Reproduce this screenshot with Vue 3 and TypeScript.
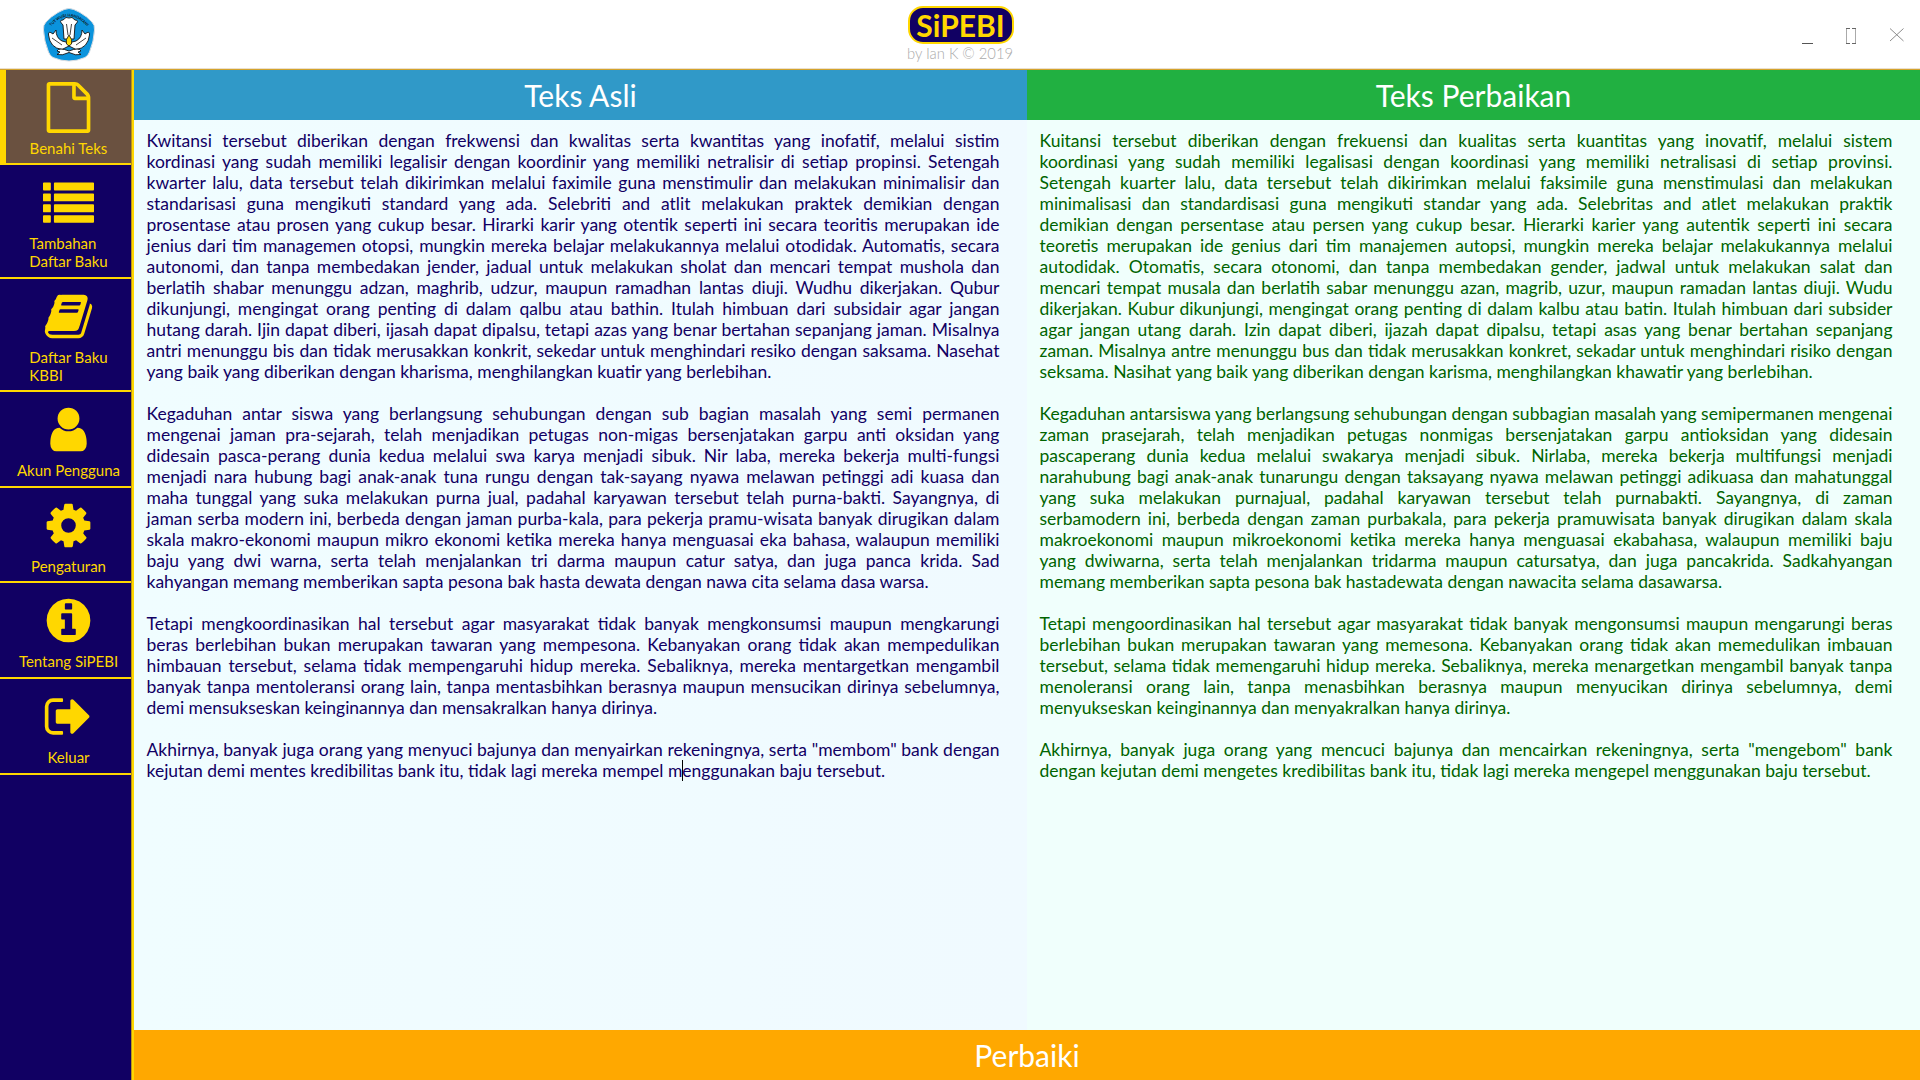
<script setup lang="ts">
interface MenuItem {
  label: string[]
  icon: string
  active?: boolean
}

const menu: MenuItem[] = [
  {
    label: ['Benahi Teks'],
    active: true,
    icon: 'M1596 380q28 28 48 76t20 88v1152q0 40-28 68t-68 28h-1344q-40 0-68-28t-28-68v-1600q0-40 28-68t68-28h896q40 0 88 20t76 48zm-444-244v376h376q-10-29-22-41l-313-313q-12-12-41-22zm384 1528v-1024h-416q-40 0-68-28t-28-68v-416h-768v1536h1280z',
  },
  {
    label: ['Tambahan', 'Daftar Baku'],
    icon: 'M30 192h216q30 0 30 30v220q0 30-30 30h-216q-30 0-30-30v-220q0-30 30-30zM30 576h216q30 0 30 30v220q0 30-30 30h-216q-30 0-30-30v-220q0-30 30-30zM30 960h216q30 0 30 30v220q0 30-30 30h-216q-30 0-30-30v-220q0-30 30-30zM30 1344h216q30 0 30 30v200q0 30-30 30h-216q-30 0-30-30v-200q0-30 30-30zM414 192h1348q30 0 30 30v220q0 30-30 30h-1348q-30 0-30-30v-220q0-30 30-30zM414 576h1348q30 0 30 30v220q0 30-30 30h-1348q-30 0-30-30v-220q0-30 30-30zM414 960h1348q30 0 30 30v220q0 30-30 30h-1348q-30 0-30-30v-220q0-30 30-30zM414 1344h1348q30 0 30 30v200q0 30-30 30h-1348q-30 0-30-30v-200q0-30 30-30z',
  },
  {
    label: ['Daftar Baku', 'KBBI'],
    icon: 'M1703 478q40 57 18 129l-275 906q-19 64-76.500 107.500t-122.500 43.500h-923q-77 0-148.500-53.500t-99.500-131.500q-24-67-2-127 0-4 3-27t4-37q1-8-3-21.500t-3-19.500q2-11 8-21t16.500-23.500 16.500-23.500q23-38 45-91.500t30-91.500q3-10 .5-30t-.5-28q3-11 17-28t17-23q21-36 42-92t25-90q1-9-2.500-32t.5-28q4-13 22-30.500t22-22.500q19-26 42.500-84.500t27.500-96.500q1-8-3-25.500t-2-26.500q2-8 9-18t18-23 17-21q8-12 16.500-30.500t15-35 16-36 19.500-32 26.500-23.500 36-11.500 47.500 5.500l-1 3q38-9 51-9h761q74 0 114 56t18 130l-274 906q-36 119-71.500 153.500t-128.500 34.500h-869q-27 0-38 15-11 16-1 43 24 70 144 70h923q29 0 56-15.500t35-41.500l300-987q7-22 5-57 38 15 59 43zm-1064 2q-4 13 2 22.500t20 9.500h608q13 0 25.500-9.500t16.500-22.500l21-64q4-13-2-22.500t-20-9.500h-608q-13 0-25.500 9.500t-16.500 22.500zm-83 256q-4 13 2 22.500t20 9.500h608q13 0 25.500-9.500t16.500-22.500l21-64q4-13-2-22.500t-20-9.500h-608q-13 0-25.500 9.500t-16.500 22.500z',
  },
  {
    label: ['Akun Pengguna'],
    icon: 'M1536 1399q0 109-62.500 187t-150.500 78h-854q-88 0-150.500-78t-62.500-187q0-85 8.500-160.500t31.500-152 58.500-131 94-89 134.500-34.500q131 128 313 128t313-128q76 0 134.500 34.500t94 89 58.500 131 31.500 152 8.500 160.500zm-256-887q0 159-112.500 271.500t-271.500 112.500-271.500-112.500-112.500-271.500 112.500-271.500 271.500-112.500 271.500 112.500 112.500 271.500z',
  },
  {
    label: ['Pengaturan'],
    icon: 'M1152 896q0-106-75-181t-181-75-181 75-75 181 75 181 181 75 181-75 75-181zm512-109v222q0 12-8 23t-20 13l-185 28q-19 54-39 91 35 50 107 138 10 12 10 25t-9 23q-27 37-99 108t-94 71q-12 0-26-9l-138-108q-44 23-91 38-16 136-29 186-7 28-36 28h-222q-14 0-24.500-8.500t-11.500-21.500l-28-184q-49-16-90-37l-141 107q-10 9-25 9-14 0-25-11-126-114-165-168-7-10-7-23 0-12 8-23 15-21 51-66.500t54-70.500q-27-50-41-99l-183-27q-13-2-21-12.500t-8-23.500v-222q0-12 8-23t19-13l186-28q14-46 39-92-40-57-107-138-10-12-10-24 0-10 9-23 26-36 98.500-107.500t94.500-71.500q13 0 26 10l138 107q44-23 91-38 16-136 29-186 7-28 36-28h222q14 0 24.500 8.500t11.500 21.500l28 184q49 16 90 37l142-107q9-9 24-9 13 0 25 10 129 119 165 170 7 8 7 22 0 12-8 23-15 21-51 66.500t-54 70.500q26 50 41 98l183 28q13 2 21 12.500t8 23.500z',
  },
  {
    label: ['Tentang SiPEBI'],
    icon: 'M1152 1376v-160q0-14-9-23t-23-9h-96v-512q0-14-9-23t-23-9h-320q-14 0-23 9t-9 23v160q0 14 9 23t23 9h96v320h-96q-14 0-23 9t-9 23v160q0 14 9 23t23 9h448q14 0 23-9t9-23zm-128-896v-160q0-14-9-23t-23-9h-192q-14 0-23 9t-9 23v160q0 14 9 23t23 9h192q14 0 23-9t9-23zm640 416q0 209-103 385.500t-279.500 279.500-385.500 103-385.500-103-279.500-279.500-103-385.500 103-385.500 279.500-279.500 385.500-103 385.500 103 279.500 279.500 103 385.500z',
  },
  {
    label: ['Keluar'],
    icon: 'M704 1440q0 4 1 20t.5 26.500-3 23.500-10 19.500-20.500 6.500h-320q-119 0-203.500-84.500t-84.500-203.500v-704q0-119 84.500-203.500t203.500-84.500h320q13 0 22.500 9.500t9.500 22.500q0 4 1 20t.5 26.500-3 23.500-10 19.500-20.500 6.500h-320q-66 0-113 47t-47 113v704q0 66 47 113t113 47h312l11.500 1 11.500 3 8 5.500 7 9 2 13.500zm928-544q0 26-19 45l-544 544q-19 19-45 19t-45-19-19-45v-288h-448q-26 0-45-19t-19-45v-384q0-26 19-45t45-19h448v-288q0-26 19-45t45-19 45 19l544 544q19 19 19 45z',
  },
]

const original: string[][] = [
  [
    'Kwitansi tersebut diberikan dengan frekwensi dan kwalitas serta kwantitas yang inofatif, melalui sistim',
    'kordinasi yang sudah memiliki legalisir dengan koordinir yang memiliki netralisir di setiap propinsi. Setengah',
    'kwarter lalu, data tersebut telah dikirimkan melalui faximile guna menstimulir dan melakukan minimalisir dan',
    'standarisasi guna mengikuti standard yang ada. Selebriti and atlit melakukan praktek demikian dengan',
    'prosentase atau prosen yang cukup besar. Hirarki karir yang otentik seperti ini secara teoritis merupakan ide',
    'jenius dari tim managemen otopsi, mungkin mereka belajar melakukannya melalui otodidak. Automatis, secara',
    'autonomi, dan tanpa membedakan jender, jadual untuk melakukan sholat dan mencari tempat mushola dan',
    'berlatih shabar menunggu adzan, maghrib, udzur, maupun ramadhan lantas diuji. Wudhu dikerjakan. Qubur',
    'dikunjungi, mengingat orang penting di dalam qalbu atau bathin. Itulah himbuan dari subsidair agar jangan',
    'hutang darah. Ijin dapat diberi, ijasah dapat dipalsu, tetapi azas yang benar bertahan sepanjang jaman. Misalnya',
    'antri menunggu bis dan tidak merusakkan konkrit, sekedar untuk menghindari resiko dengan saksama. Nasehat',
    'yang baik yang diberikan dengan kharisma, menghilangkan kuatir yang berlebihan.',
  ],
  [
    'Kegaduhan antar siswa yang berlangsung sehubungan dengan sub bagian masalah yang semi permanen',
    'mengenai jaman pra-sejarah, telah menjadikan petugas non-migas bersenjatakan garpu anti oksidan yang',
    'didesain pasca-perang dunia kedua melalui swa karya menjadi sibuk. Nir laba, mereka bekerja multi-fungsi',
    'menjadi nara hubung bagi anak-anak tuna rungu dengan tak-sayang nyawa melawan petinggi adi kuasa dan',
    'maha tunggal yang suka melakukan purna jual, padahal karyawan tersebut telah purna-bakti. Sayangnya, di',
    'jaman serba modern ini, berbeda dengan jaman purba-kala, para pekerja pramu-wisata banyak dirugikan dalam',
    'skala makro-ekonomi maupun mikro ekonomi ketika mereka hanya menguasai eka bahasa, walaupun memiliki',
    'baju yang dwi warna, serta telah menjalankan tri darma maupun catur satya, dan juga panca krida. Sad',
    'kahyangan memang memberikan sapta pesona bak hasta dewata dengan nawa cita selama dasa warsa.',
  ],
  [
    'Tetapi mengkoordinasikan hal tersebut agar masyarakat tidak banyak mengkonsumsi maupun mengkarungi',
    'beras berlebihan bukan merupakan tawaran yang mempesona. Kebanyakan orang tidak akan mempedulikan',
    'himbauan tersebut, selama tidak mempengaruhi hidup mereka. Sebaliknya, mereka mentargetkan mengambil',
    'banyak tanpa mentoleransi orang lain, tanpa mentasbihkan berasnya maupun mensucikan dirinya sebelumnya,',
    'demi mensukseskan keinginannya dan mensakralkan hanya dirinya.',
  ],
  [
    'Akhirnya, banyak juga orang yang menyuci bajunya dan menyairkan rekeningnya, serta "membom" bank dengan',
    'kejutan demi mentes kredibilitas bank itu, tidak lagi mereka mempel m|enggunakan baju tersebut.',
  ],
]

const corrected: string[][] = [
  [
    'Kuitansi tersebut diberikan dengan frekuensi dan kualitas serta kuantitas yang inovatif, melalui sistem',
    'koordinasi yang sudah memiliki legalisasi dengan koordinasi yang memiliki netralisasi di setiap provinsi.',
    'Setengah kuarter lalu, data tersebut telah dikirimkan melalui faksimile guna menstimulasi dan melakukan',
    'minimalisasi dan standardisasi guna mengikuti standar yang ada. Selebritas and atlet melakukan praktik',
    'demikian dengan persentase atau persen yang cukup besar. Hierarki karier yang autentik seperti ini secara',
    'teoretis merupakan ide genius dari tim manajemen autopsi, mungkin mereka belajar melakukannya melalui',
    'autodidak. Otomatis, secara otonomi, dan tanpa membedakan gender, jadwal untuk melakukan salat dan',
    'mencari tempat musala dan berlatih sabar menunggu azan, magrib, uzur, maupun ramadan lantas diuji. Wudu',
    'dikerjakan. Kubur dikunjungi, mengingat orang penting di dalam kalbu atau batin. Itulah himbuan dari subsider',
    'agar jangan utang darah. Izin dapat diberi, ijazah dapat dipalsu, tetapi asas yang benar bertahan sepanjang',
    'zaman. Misalnya antre menunggu bus dan tidak merusakkan konkret, sekadar untuk menghindari risiko dengan',
    'seksama. Nasihat yang baik yang diberikan dengan karisma, menghilangkan khawatir yang berlebihan.',
  ],
  [
    'Kegaduhan antarsiswa yang berlangsung sehubungan dengan subbagian masalah yang semipermanen mengenai',
    'zaman prasejarah, telah menjadikan petugas nonmigas bersenjatakan garpu antioksidan yang didesain',
    'pascaperang dunia kedua melalui swakarya menjadi sibuk. Nirlaba, mereka bekerja multifungsi menjadi',
    'narahubung bagi anak-anak tunarungu dengan taksayang nyawa melawan petinggi adikuasa dan mahatunggal',
    'yang suka melakukan purnajual, padahal karyawan tersebut telah purnabakti. Sayangnya, di zaman',
    'serbamodern ini, berbeda dengan zaman purbakala, para pekerja pramuwisata banyak dirugikan dalam skala',
    'makroekonomi maupun mikroekonomi ketika mereka hanya menguasai ekabahasa, walaupun memiliki baju',
    'yang dwiwarna, serta telah menjalankan tridarma maupun catursatya, dan juga pancakrida. Sadkahyangan',
    'memang memberikan sapta pesona bak hastadewata dengan nawacita selama dasawarsa.',
  ],
  [
    'Tetapi mengoordinasikan hal tersebut agar masyarakat tidak banyak mengonsumsi maupun mengarungi beras',
    'berlebihan bukan merupakan tawaran yang memesona. Kebanyakan orang tidak akan memedulikan imbauan',
    'tersebut, selama tidak memengaruhi hidup mereka. Sebaliknya, mereka menargetkan mengambil banyak tanpa',
    'menoleransi orang lain, tanpa menasbihkan berasnya maupun menyucikan dirinya sebelumnya, demi',
    'menyukseskan keinginannya dan menyakralkan hanya dirinya.',
  ],
  [
    'Akhirnya, banyak juga orang yang mencuci bajunya dan mencairkan rekeningnya, serta "mengebom" bank',
    'dengan kejutan demi mengetes kredibilitas bank itu, tidak lagi mereka mengepel menggunakan baju tersebut.',
  ],
]

const panes = [
  { key: 'source', title: 'Teks Asli', paragraphs: original },
  { key: 'result', title: 'Teks Perbaikan', paragraphs: corrected },
]
</script>

<template>
  <div class="app">
    <header class="topbar">
      <svg class="emblem" viewBox="0 0 54 56">
        <path d="M27 1.500Q31 1.500 38 5.500Q45 9.500 50 15Q53 18 52.500 23Q52 34 47.500 45Q46 49 43 50.500Q27 57.500 11 50.500Q8 49 6.500 45Q2 34 1.500 23Q1 18 4 15Q9 9.500 16 5.500Q23 1.500 27 1.500Z" fill="#0b93dc" stroke="#d9dde2" stroke-width="1" />
        <path id="motto" d="M8.500 20Q27 -1 45.500 20" fill="none" />
        <text class="motto"><textPath href="#motto" startOffset="50%" text-anchor="middle">TUT WURI HANDAYANI</textPath></text>
        <g fill="#fff" stroke="#111" stroke-width=".9" stroke-linejoin="round">
          <path d="M27 39L20 42.500Q8 41 6.500 28Q6 23 11 27L14 23Q14 31 20 34L24 35ZM27 39L34 42.500Q46 41 47.500 28Q48 23 43 27L40 23Q40 31 34 34L30 35Z" />
          <path d="M22 32L21 18Q16 13 21 13Q24 9 27 11Q30 9 33 13Q38 13 33 18L32 32Z" />
          <path d="M27 44Q17 40 15 44L18 45L15 47.500Q20 49 27 45.500Q34 49 39 47.500L36 45L39 44Q37 40 27 44Z" />
        </g>
        <path d="M24.500 17L26 28M29.500 17L28 28M10 31L20 38M44 31L34 38" stroke="#111" stroke-width=".8" fill="none" />
        <path d="M27 28Q31 33 29.500 37L27 39L24.500 37Q23 33 27 28Z" fill="#ffdc00" stroke="#222" stroke-width=".9" />
      </svg>
      <div class="brand">
        <div class="badge">SiPEBI</div>
        <div class="credit">by Ian K © 2019</div>
      </div>
      <div class="controls">
        <svg viewBox="0 0 104 18" width="104" height="18" fill="none" shape-rendering="crispEdges">
          <path d="M0 15.500H11" stroke="#555" />
          <path d="M44.500 .5V15.500M53.500 .5V15.500" stroke="#aaa" />
          <path d="M44 .5H48M50 .5H54M44 15.500H48M50 15.500H54" stroke="#666" />
          <path d="M88 .5L101.500 13M101.500 .5L88 13" stroke="#8c8c8c" shape-rendering="auto" />
        </svg>
      </div>
    </header>

    <div class="body">
      <nav class="sidebar">
        <a v-for="item in menu" :key="item.label.join(' ')" class="item" :class="{ active: item.active }">
          <svg class="icon" viewBox="0 0 1792 1792"><path :d="item.icon" /></svg>
          <span class="label"><span v-for="part in item.label" :key="part">{{ part }}</span></span>
        </a>
      </nav>

      <main class="main">
        <div class="panes">
          <section v-for="pane in panes" :key="pane.key" class="pane" :class="pane.key">
            <h2>{{ pane.title }}</h2>
            <div class="text">
              <p v-for="(lines, p) in pane.paragraphs" :key="p">
                <span v-for="(line, l) in lines" :key="l" class="line" :class="{ last: l === lines.length - 1 }"><template v-for="(chunk, c) in line.split('|')" :key="c"><i v-if="c" class="caret"></i>{{ chunk }}</template></span>
              </p>
            </div>
          </section>
        </div>
        <button class="fix">Perbaiki</button>
      </main>
    </div>
  </div>
</template>

<style>
body {
  margin: 0;
  overflow: hidden;
}
</style>

<style scoped>
.app {
  width: 1920px;
  height: 1080px;
  display: flex;
  flex-direction: column;
  background: #fff;
  font-family: Lato, Carlito, sans-serif;
}
.topbar {
  box-sizing: border-box;
  height: 70px;
  flex: none;
  display: grid;
  grid-template-columns: 1fr auto 1fr;
  border-bottom: 1px solid #d4a32c;
  box-shadow: inset 0 -1px #eadfcd;
}
.emblem {
  width: 54px;
  height: 56px;
  margin: 7px 0 0 42px;
}
.motto {
  font: 700 3.800px Lato, sans-serif;
  fill: #111;
}
.brand {
  padding-top: 6px;
  text-align: center;
}
.badge {
  box-sizing: border-box;
  width: 106px;
  height: 38px;
  margin-left: 1px;
  border: 2px solid #ffd700;
  border-radius: 15px;
  background: #110063;
  color: #ffd700;
  font-size: 30px;
  font-weight: 700;
  line-height: 34px;
}
.credit {
  font-weight: 300;
  font-size: 14.800px;
  line-height: 18px;
  color: #aaa;
  white-space: nowrap;
}
.controls {
  display: flex;
  justify-content: flex-end;
  padding: 28px 14px 0 0;
}
.body {
  flex: 1;
  display: flex;
  min-height: 0;
}
.sidebar {
  box-sizing: border-box;
  width: 134px;
  flex: none;
  display: grid;
  grid-template-rows: 95px 114px 113px 96px 95px 96px 96px;
  align-content: start;
  background: #110063;
  border-right: 2px solid #ffd700;
  box-shadow: inset -1px 0 #b8931c;
  color: #ffd700;
}
.item {
  box-sizing: border-box;
  width: 131px;
  padding: 12px 0 0 6px;
  border-bottom: 2px solid #ffd700;
  display: flex;
  flex-direction: column;
  align-items: center;
}
.item.active {
  padding-left: 0;
  border-left: 6px solid #ffd700;
  background: #6a5140;
}
.icon {
  width: 51px;
  height: 51px;
  flex: none;
  fill: #ffd700;
}
.label {
  margin-top: 6px;
  font-size: 15px;
  line-height: 18px;
}
.label span {
  display: block;
}
.main {
  flex: 1;
  display: flex;
  flex-direction: column;
}
.panes {
  flex: 1;
  display: grid;
  grid-template-columns: 1fr 1fr;
}
.pane h2 {
  margin: 0;
  height: 50px;
  line-height: 50px;
  font-size: 30px;
  font-weight: 400;
  text-align: center;
  color: #fff;
}
.source {
  background: linear-gradient(90deg, #f0fdff, #f0faff);
  color: #110063;
}
.source h2 {
  background: #3099c8;
}
.result {
  background: #f0fffc;
  color: #006400;
}
.result h2 {
  background: #21b041;
}
.text {
  padding: 10px 27.500px 0 12.500px;
  font-size: 17.500px;
}
.text p {
  margin: 0 0 21px;
}
.line {
  display: block;
  height: 21px;
  line-height: 21px;
  text-align-last: justify;
  white-space: nowrap;
}
.line.last {
  text-align-last: left;
}
.caret {
  display: inline-block;
  width: 1px;
  height: 21px;
  margin-right: -1px;
  vertical-align: top;
  background: #000;
}
.fix {
  height: 50px;
  flex: none;
  margin: 0;
  padding: 0;
  border: 0;
  background: #ffa800;
  color: #fff;
  font: 400 30px/50px Lato, Carlito, sans-serif;
}
</style>
